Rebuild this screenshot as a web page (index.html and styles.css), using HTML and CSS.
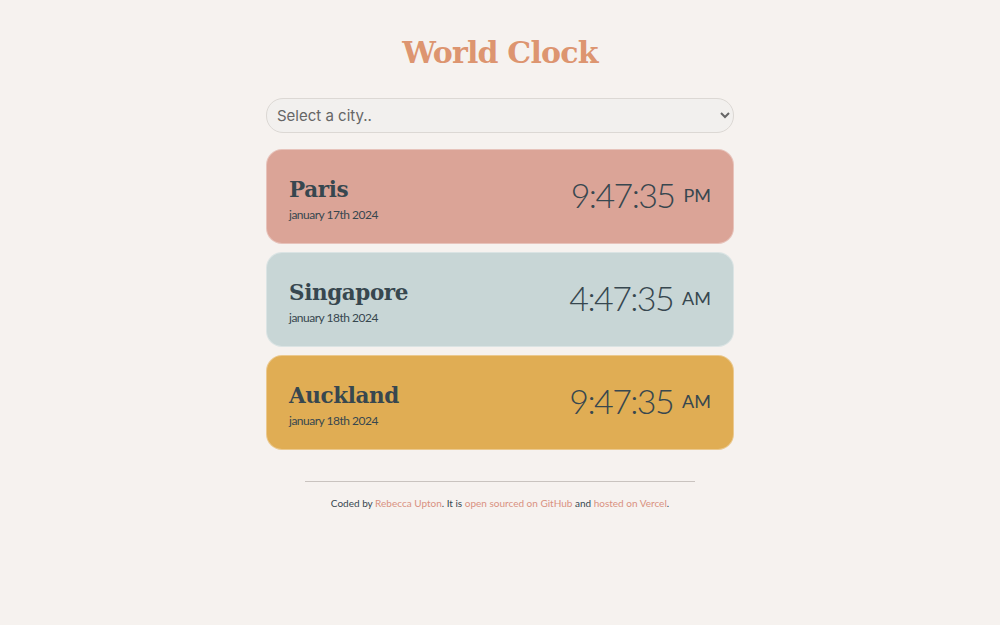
FILE: index.html
```html
<!DOCTYPE html>
<html lang="en">
<head>
<meta charset="utf-8">
<title>World Clock</title>
<link rel="stylesheet" href="styles.css">
</head>
<body>
<main class="container">
  <h1 class="title">World Clock</h1>
  <select class="city-select">
    <option>Select a city..</option>
  </select>
  <div class="cities">
    <div class="city paris">
      <div class="city-info">
        <h2 class="city-name">Paris</h2>
        <div class="city-date">january 17th 2024</div>
      </div>
      <div class="city-time">9:47:35 <span class="ampm">PM</span></div>
    </div>
    <div class="city singapore">
      <div class="city-info">
        <h2 class="city-name">Singapore</h2>
        <div class="city-date">january 18th 2024</div>
      </div>
      <div class="city-time">4:47:35 <span class="ampm">AM</span></div>
    </div>
    <div class="city auckland">
      <div class="city-info">
        <h2 class="city-name">Auckland</h2>
        <div class="city-date">january 18th 2024</div>
      </div>
      <div class="city-time">9:47:35 <span class="ampm">AM</span></div>
    </div>
  </div>
  <footer class="footer">
    <hr class="rule">
    <p>Coded by <a href="#">Rebecca Upton</a>. It is <a href="#">open sourced on GitHub</a> and <a href="#">hosted on Vercel</a>.</p>
  </footer>
</main>
</body>
</html>
```

FILE: styles.css
```css
* { box-sizing: border-box; }
html, body { margin: 0; padding: 0; }
body {
  background: #f6f2ef;
  color: #37474f;
  font-family: "Lato", "Liberation Sans", sans-serif;
}
.container {
  width: 468px;
  margin: 0 auto;
  padding-top: 30px;
}
.title {
  margin: 0;
  text-align: center;
  font-family: "DejaVu Serif", "Liberation Serif", serif;
  font-weight: bold;
  font-size: 30px;
  letter-spacing: -0.8px;
  line-height: 46px;
  color: #dd9570;
}
.city-select {
  display: block;
  width: 100%;
  height: 35px;
  margin-top: 22px;
  padding: 0 8px 0 6px;
  border: 1px solid #dcd8d4;
  border-radius: 17px;
  background: #f2f0ee;
  color: #666;
  font-family: "Inter", "Liberation Sans", sans-serif;
  font-size: 15px;
}
.cities {
  display: flex;
  flex-direction: column;
  gap: 8px;
  margin-top: 16px;
}
.city {
  height: 95px;
  border-radius: 16px;
  border: 1px solid rgba(255,255,255,0.35);
  padding: 0 22px 0 22px;
  display: flex;
  align-items: center;
  justify-content: space-between;
}
.paris { background: #dba497; }
.singapore { background: #c8d6d6; }
.auckland { background: #e0ad54; }
.city-info { padding-top: 5px; }
.city-name {
  margin: 0;
  font-family: "DejaVu Serif", "Liberation Serif", serif;
  font-weight: bold;
  font-size: 21.5px;
  letter-spacing: -0.4px;
  line-height: 28px;
  color: #37474f;
}
.city-date {
  margin-top: 3px;
  font-size: 12px;
  font-weight: 400;
  letter-spacing: -0.5px;
  color: #37474f;
}
.city-time {
  font-family: "Lato", sans-serif;
  font-weight: 300;
  font-size: 34px;
  letter-spacing: -1.6px;
  color: #37474f;
  display: flex;
  align-items: flex-start;
  gap: 9px;
  margin-top: -5px;
}
.ampm {
  font-size: 18px;
  font-weight: 400;
  letter-spacing: 0;
  margin-top: 10px;
}
.footer {
  margin: 31px auto 0;
  width: 390px;
  text-align: center;
}
.rule {
  margin: 0;
  border: 0;
  border-top: 1px solid #c9c3bf;
}
.footer p {
  margin: 15px 0 0;
  font-size: 10px;
  color: #37474f;
}
.footer a {
  color: #d9917f;
  text-decoration: none;
}
```
